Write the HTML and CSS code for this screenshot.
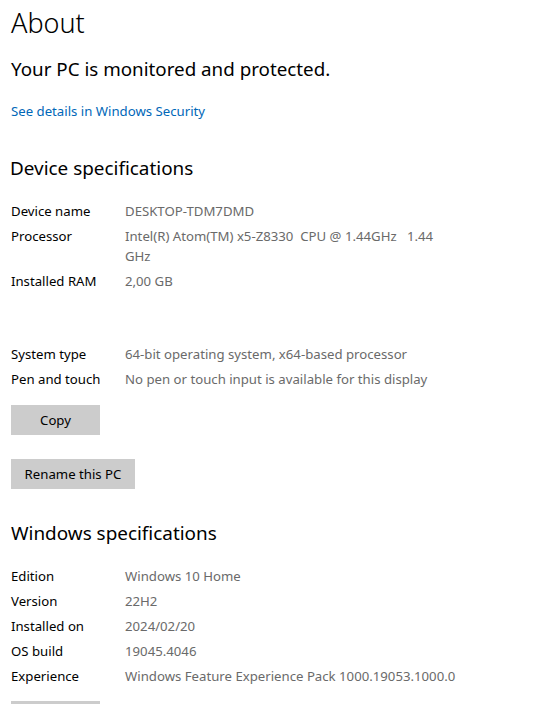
FILE: index.html
```html
<!DOCTYPE html>
<html lang="en">
<head>
<meta charset="UTF-8" />
<meta name="viewport" content="width=device-width, initial-scale=1" />
<title>About</title>
<link rel="stylesheet" href="styles.css">
</head>
<body>

<main class="page">
  <h1 class="title">About</h1>
  <p class="status">Your PC is monitored and protected.</p>
  <a class="link" href="#">See details in Windows Security</a>

  <h2 class="section">Device specifications</h2>
  <dl class="specs">
    <dt>Device name</dt><dd>DESKTOP-TDM7DMD</dd>
    <dt>Processor</dt><dd>Intel(R) Atom(TM) x5-Z8330  CPU @ 1.44GHz   1.44<br>GHz</dd>
    <dt>Installed RAM</dt><dd>2,00 GB</dd>
    <div class="blank"></div>
    <dt>System type</dt><dd>64-bit operating system, x64-based processor</dd>
    <dt>Pen and touch</dt><dd>No pen or touch input is available for this display</dd>
  </dl>

  <button class="btn btn-copy">Copy</button>
  <button class="btn btn-rename">Rename this PC</button>

  <h2 class="section section-win">Windows specifications</h2>
  <dl class="specs">
    <dt>Edition</dt><dd>Windows 10 Home</dd>
    <dt>Version</dt><dd>22H2</dd>
    <dt>Installed on</dt><dd>2024/02/20</dd>
    <dt>OS build</dt><dd>19045.4046</dd>
    <dt>Experience</dt><dd>Windows Feature Experience Pack 1000.19053.1000.0</dd>
  </dl>

  <!-- next Copy button, only its top edge is in view -->
  <button class="btn btn-copy btn-last" aria-label="Copy"></button>
</main>

</body>
</html>
```
FILE: styles.css
```css
body {
  margin: 0;
  background: #fff;
  color: #000;
  font-family: "Noto Sans", "Open Sans", sans-serif;
  font-size: 13.2px;
  line-height: 20px;
}
.page {
  display: flex;
  flex-direction: column;
  align-items: flex-start;
  padding: 5px 11px 0;
}
.title {
  margin: 0;
  font-size: 27px;
  font-weight: 300;
  line-height: 36px;
}
.status {
  margin: 14px 0 0;
  font-size: 18.8px;
  line-height: 28px;
}
.link {
  margin-top: 18px;
  color: #0067b8;
  text-decoration: none;
}
.section {
  margin: 33px 0 0 -1px;
  font-size: 18.9px;
  font-weight: 400;
  line-height: 28px;
}
.section-win {
  margin: 30px 0 0;
}
.specs {
  display: grid;
  grid-template-columns: 114px auto;
  row-gap: 5px;
  margin: 19px 0 0;
}
.specs dt {
  color: #000;
}
.specs dd {
  margin: 0;
  color: #6a6a6a;
  white-space: pre-wrap;
}
.blank {
  grid-column: 1 / 3;
  height: 43px;
}
.btn {
  height: 30px;
  padding: 0;
  border: none;
  background: #ccc;
  color: #000;
  font: inherit;
}
.btn-copy {
  width: 89px;
  margin-top: 16px;
}
.btn-rename {
  width: 124px;
  margin-top: 24px;
}
.btn-last {
  margin-top: 15px;
}
```
